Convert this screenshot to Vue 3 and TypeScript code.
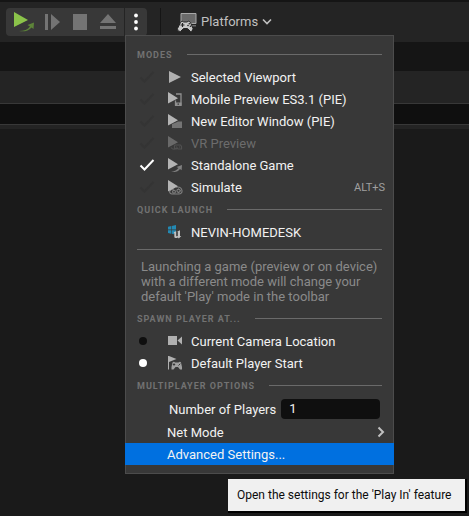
<script setup lang="ts">
import { ref } from 'vue'

interface PlayMode {
  id: string
  label: string
  disabled?: boolean
  shortcut?: string
}

const modes: PlayMode[] = [
  { id: 'viewport', label: 'Selected Viewport' },
  { id: 'mobile', label: 'Mobile Preview ES3.1 (PIE)' },
  { id: 'window', label: 'New Editor Window (PIE)' },
  { id: 'vr', label: 'VR Preview', disabled: true },
  { id: 'standalone', label: 'Standalone Game' },
  { id: 'simulate', label: 'Simulate', shortcut: 'ALT+S' },
]

const spawns = [
  { id: 'camera', label: 'Current Camera Location' },
  { id: 'start', label: 'Default Player Start' },
]

const mode = ref('standalone')
const spawn = ref('start')
const players = ref('1')
</script>

<template>
  <div class="editor">
    <header class="toolbar">
      <div class="play-group">
        <div class="controls">
          <button type="button" aria-label="Play">
            <svg width="22" height="22" viewBox="0 0 22 22">
              <path d="M1 1 15 9 1 16z" fill="#8bc34a" />
              <path d="M6 20C11 20 15 18.500 17 15.500L14.500 14 21 11.500 20.500 18 18.500 16.500C15.500 20 11 21 6 20z" fill="#5d8439" />
            </svg>
          </button>
          <button type="button" aria-label="Skip frame">
            <svg width="22" height="22" viewBox="0 0 22 22">
              <path d="M4 3h3v16H4zM10 3l9 8-9 8z" fill="#747474" />
            </svg>
          </button>
          <button type="button" aria-label="Stop">
            <svg width="22" height="22" viewBox="0 0 22 22">
              <path d="M4 3h14v16H4z" fill="#747474" />
            </svg>
          </button>
          <button type="button" aria-label="Eject">
            <svg width="22" height="22" viewBox="0 0 22 22">
              <path d="M11 3l8 9H3zM3 15h16v3H3z" fill="#747474" />
            </svg>
          </button>
        </div>
        <div class="options">
          <button type="button" class="dots" aria-label="Play options" aria-expanded="true">
            <svg width="6" height="18" viewBox="0 0 6 18" fill="#fff">
              <circle cx="3" cy="2.500" r="1.900" />
              <circle cx="3" cy="9" r="1.900" />
              <circle cx="3" cy="15.500" r="1.900" />
            </svg>
          </button>

          <div class="menu">
            <h2 class="heading">MODES</h2>
            <label
              v-for="m in modes"
              :key="m.id"
              class="row"
              :class="{ disabled: m.disabled }"
            >
              <span class="mark">
                <input v-model="mode" type="radio" name="mode" class="tick" :value="m.id" :disabled="m.disabled" />
                <svg class="check" width="16" height="14" viewBox="0 0 16 14">
                  <path d="M1.500 7.500 5.500 11.500 14.500 2" fill="none" stroke="currentColor" stroke-width="2" />
                </svg>
              </span>
              <svg class="icon" width="16" height="16" viewBox="0 0 16 16">
                <path v-if="m.id === 'viewport'" d="M2 2 14 8 2 14z" fill="#b0b0b0" />
                <template v-else>
                  <g v-if="m.id === 'mobile'">
                    <path d="M9 3h5v11H8.500V9.500" fill="none" stroke="#909090" stroke-width="1.300" />
                    <path d="M8 11.500h6.500V15H8z" fill="#909090" />
                    <path d="M10.500 12.500h1.500v1.200h-1.500z" fill="#383838" />
                  </g>
                  <path v-else-if="m.id === 'window'" d="M5 11l4-1.500 2-1h4V15H5z" fill="#747474" />
                  <g v-else-if="m.id === 'vr'" fill="none" stroke="#747474" stroke-width="1.200">
                    <path d="M4 12.500c2 2.500 4 2 5 .5M8 10h5.500l1 1.500v2.500H11l-.8-1-.9 1H7.500v-3z" />
                    <path d="M9 12h1M12 12h1" />
                  </g>
                  <path v-else-if="m.id === 'standalone'" d="M4 14.500c4-.2 6-1.500 7.500-3.500L9.500 10 15 8l-.4 5.300-1.600-1.200C11 14.800 8 15.600 4 14.500z" fill="#808080" />
                  <g v-else fill="none" stroke="#808080" stroke-width="1.100">
                    <path d="M2.500 12.500C3.500 10.500 5 10 7 10M9 8.200c3-.5 5.500.8 6 3.300s-1.500 3.500-3 3.500H5c-1.500 0-2.300-1-2.500-2.500" />
                    <circle cx="7" cy="12.700" r="1.400" />
                    <circle cx="11.500" cy="11.800" r="1.600" />
                    <path d="M11.500 9.500v1M11.500 13.300v1M13.100 11.800h1" />
                  </g>
                  <path d="M1 1 11 7.200 1 12.500z" fill="#b4b4b4" />
                </template>
              </svg>
              <span class="label">{{ m.label }}</span>
              <kbd v-if="m.shortcut">{{ m.shortcut }}</kbd>
            </label>

            <h2 class="heading">QUICK LAUNCH</h2>
            <button type="button" class="row">
              <span class="mark" />
              <svg class="icon" width="16" height="16" viewBox="0 0 16 16">
                <path d="M1 2.700 4.200 2V5.600H1zM4.800 1.900 9 1V5.600H4.800zM1 6.200h3.200v3.500L1 9zM4.800 6.200H9V8L7 10.200 4.800 9.800z" fill="#2389b3" />
                <path d="M6.500 8.200 9.200 7.200V11.800Q9.500 12.800 10.800 12V8L10.300 7.400 13 6.200V11.900l1.300.1L11.800 14.500 10.900 13.500Q7.300 15 7.300 12.500V9z" fill="#c0c0c0" />
              </svg>
              <span class="label">NEVIN-HOMEDESK</span>
            </button>
            <hr />
            <p class="hint">
              Launching a game (preview or on device)<br />with a different mode will change your<br />default 'Play' mode in the toolbar
            </p>

            <h2 class="heading">SPAWN PLAYER AT...</h2>
            <label v-for="s in spawns" :key="s.id" class="row">
              <span class="mark">
                <input v-model="spawn" type="radio" name="spawn" class="radio" :value="s.id" />
              </span>
              <svg class="icon" width="16" height="16" viewBox="0 0 16 16">
                <path v-if="s.id === 'camera'" d="M1 3h9v9H1zM10.500 7.500 15 3.500v8z" fill="#b0b0b0" />
                <template v-else>
                  <path d="M1.500 1v13.500" stroke="#b0b0b0" />
                  <path d="M2 1 9.500 4 2 7z" fill="#b0b0b0" />
                  <path d="M5.500 7.500Q7 6 8 7.500h3.500Q13 6 14 7.500L15 12v2.500h-2l-2-2.500H8.500l-2 2.500H4.500V12z" fill="#a0a0a0" />
                  <path d="M5.800 9.500h2.400M7 8.300v2.400M11.500 10.500l1.800-1.800" stroke="#383838" />
                </template>
              </svg>
              <span class="label">{{ s.label }}</span>
            </label>

            <h2 class="heading">MULTIPLAYER OPTIONS</h2>
            <div class="players">
              <label for="players">Number of Players</label>
              <input id="players" v-model="players" type="text" inputmode="numeric" />
            </div>
            <button type="button" class="row plain">
              <span class="label">Net Mode</span>
              <svg class="arrow" width="8" height="12" viewBox="0 0 8 12">
                <path d="M1.500 1.500 6 6l-4.500 4.500" fill="none" stroke="#c0c0c0" stroke-width="2" />
              </svg>
            </button>
            <button type="button" class="row plain active" aria-describedby="settings-tip">
              <span class="label">Advanced Settings...</span>
              <span id="settings-tip" class="tooltip" role="tooltip">Open the settings for the 'Play In' feature</span>
            </button>
          </div>
        </div>
      </div>

      <button type="button" class="platforms">
        <svg width="20" height="20" viewBox="0 0 20 20">
          <path d="M4 1.500h15v10H4z" fill="#6a6a6a" stroke="#a8a8a8" />
          <path d="M15 13h4v1.500h-4z" fill="#6a6a6a" />
          <path d="M3.500 10.500Q5 8 6.800 10h3Q12 8 13.500 10.500L16 16.500Q16 20 13.500 19.500L10.500 16.500h-4L3.500 19.500Q0 20 .5 16.500z" fill="#c8c8c8" stroke="#242424" />
          <path d="M3.500 13h4M5.500 11v4" stroke="#242424" stroke-width="1.200" />
          <circle cx="12.300" cy="11.800" r=".8" fill="#242424" />
          <circle cx="11" cy="13.500" r=".8" fill="#242424" />
          <circle cx="13.500" cy="14.300" r=".8" fill="#242424" />
        </svg>
        <span>Platforms</span>
        <svg width="10" height="8" viewBox="0 0 10 8">
          <path d="M1 1.500 5 5.500l4-4" fill="none" stroke="#c0c0c0" stroke-width="1.600" />
        </svg>
      </button>
    </header>
    <div class="gap" />
    <div class="panel" />
    <div class="track" />
    <div class="edge" />
  </div>
</template>

<style>
body {
  background: #1a1a1a;
}
</style>

<style scoped>
.editor {
  min-height: 100vh;
  font: 13px/22px Roboto, 'Liberation Sans', sans-serif;
  color: #f2f2f2;
}

.editor * {
  box-sizing: border-box;
}

button,
input {
  margin: 0;
  padding: 0;
  border: 0;
  background: none;
  color: inherit;
  font: inherit;
}

svg {
  display: block;
  flex: none;
}

.toolbar {
  display: flex;
  align-items: flex-start;
  height: 42px;
  padding: 6px 6px 0;
  border-top: 2px solid #151515;
  background: #242424;
}

.play-group {
  display: flex;
  gap: 1px;
  height: 28px;
}

.controls {
  display: flex;
  align-items: center;
  gap: 6px;
  padding: 0 5px 0 7px;
  border-radius: 4px 0 0 4px;
  background: #383838;
}

.options {
  position: relative;
}

.dots {
  display: flex;
  align-items: center;
  justify-content: center;
  width: 22px;
  height: 28px;
  border-radius: 0 4px 4px 0;
  background: #383838;
}

.platforms {
  display: flex;
  align-items: center;
  gap: 4px;
  height: 28px;
  margin-left: 13px;
  padding-left: 16px;
  border-left: 1px solid #151515;
  color: #c0c0c0;
}

.gap {
  height: 29px;
  background: #151515;
}

.panel {
  height: 33px;
  border-bottom: 1px solid #383838;
  background: #242424;
}

.track {
  height: 21px;
  border-bottom: 1px solid #383838;
  background: #0f0f0f;
}

.edge {
  height: 4px;
  background: #242424;
}

.menu {
  position: absolute;
  z-index: 1;
  top: 27px;
  left: 0;
  width: 269px;
  padding: 7px 0 8px;
  border: 1px solid #4c4c4c;
  background: #383838;
}

.heading {
  display: flex;
  align-items: center;
  gap: 14px;
  height: 23px;
  margin: 0;
  padding: 0 11px;
  color: #727272;
  font-size: 9px;
  font-weight: 700;
  letter-spacing: 1px;
}

.heading::after {
  content: '';
  flex: 1;
  height: 1px;
  background: #6a6a6a;
}

.row {
  position: relative;
  display: flex;
  align-items: center;
  width: 100%;
  height: 22px;
  padding: 0 8px 0 13px;
  text-align: left;
}

.mark {
  display: grid;
  align-items: center;
  width: 28px;
}

.mark > * {
  grid-area: 1 / 1;
}

.tick {
  width: 16px;
  height: 14px;
  appearance: none;
}

.check {
  color: #343434;
  pointer-events: none;
}

.tick:checked + .check {
  color: #fff;
}

.radio {
  width: 8px;
  height: 8px;
  border-radius: 50%;
  background: #0f0f0f;
  appearance: none;
}

.radio:checked {
  background: #fff;
}

.icon {
  margin-right: 8px;
}

.label {
  flex: 1;
  padding-top: 2px;
  white-space: nowrap;
}

.disabled .label {
  color: #6c6c6c;
}

.disabled .icon {
  opacity: 0.4;
}

kbd {
  padding-top: 2px;
  color: #a0a0a0;
  font: 11px/22px Roboto, 'Liberation Sans', sans-serif;
}

hr {
  height: 1px;
  margin: 6px 11px 0;
  border: 0;
  background: #6a6a6a;
}

.hint {
  margin: 9px 15px 3px;
  color: #8a8a8a;
  line-height: 15px;
  white-space: nowrap;
}

.players {
  display: flex;
  align-items: center;
  gap: 5px;
  height: 24px;
  padding: 0 13px 0 43px;
}

.players label {
  padding-top: 2px;
  white-space: nowrap;
}

.players input {
  flex: 1;
  min-width: 0;
  height: 20px;
  padding: 0 8px;
  border-radius: 4px;
  background: #0f0f0f;
}

.plain {
  padding-left: 41px;
}

.active {
  background: #0070e0;
  box-shadow: -1px 0 #0070e0, 1px 0 #0070e0;
}

.tooltip {
  position: absolute;
  top: 36px;
  left: 102px;
  min-width: 237px;
  padding: 0 9px;
  background: #f0f0f0;
  box-shadow: 1px 1px 0 1px #000;
  color: #0c0c0c;
  font-size: 12px;
  line-height: 32px;
  white-space: nowrap;
}
</style>
